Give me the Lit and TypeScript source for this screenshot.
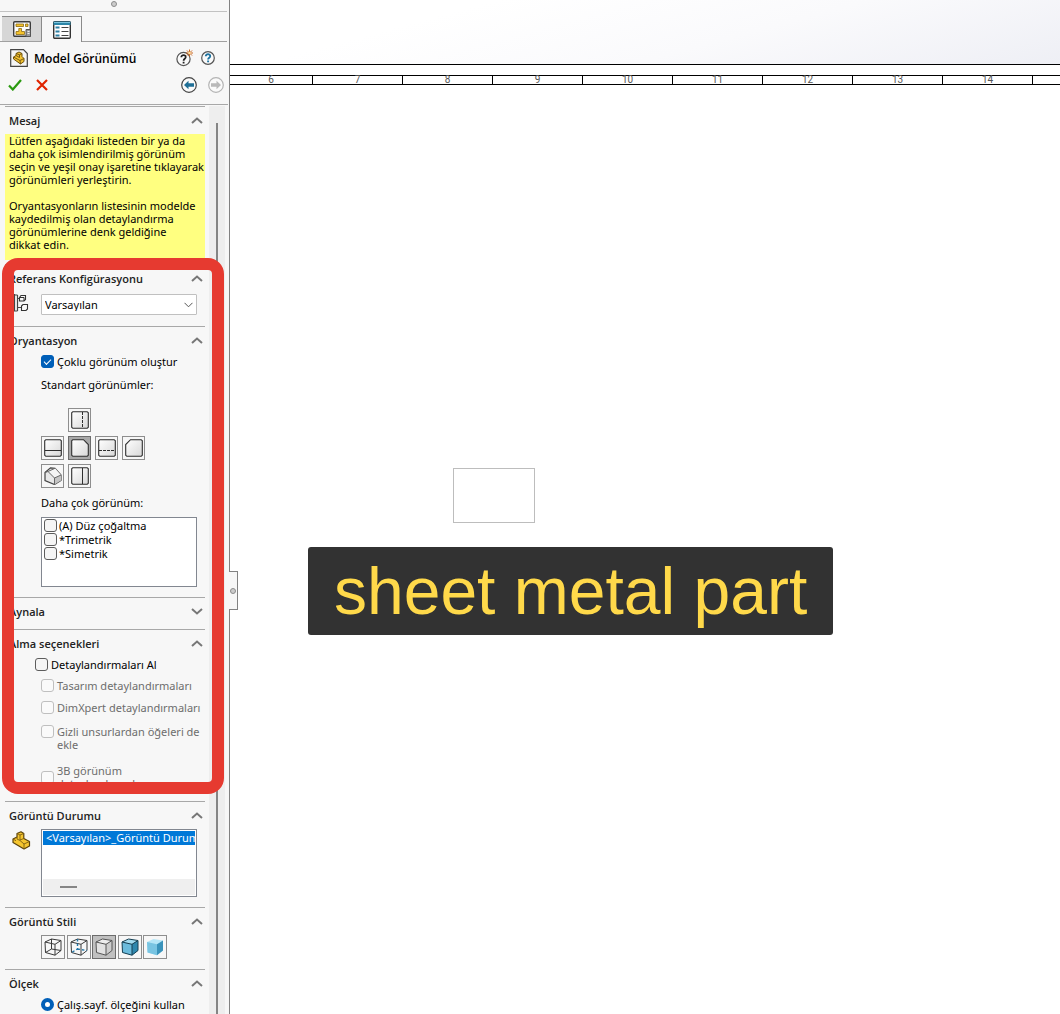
import { LitElement, html, svg, css, nothing } from "lit";
import { customElement, property, state } from "lit/decorators.js";

const icons: Record<string, unknown> = {
  sheetTab: svg`<svg width="18" height="16" viewBox="0 0 18 16">
    <rect x=".7" y=".7" width="16.600" height="14.600" rx="1" fill="#fdfdfd" stroke="#3c3c3c" stroke-width="1.400"/>
    <path d="M3 3h7.500v2.500H3zM12.500 3H15v2.500h-2.500zM5.800 7.500h2.700v3h3v3H3v-3h2.800z" fill="#f5c32c" stroke="#8a6a14" stroke-width=".8"/>
    <path d="M13 15.500V8.500h4.500v7z" fill="#999" stroke="#555" stroke-width="1"/><path d="M14.500 10.500h2M14.500 12.500h2" stroke="#eee"/></svg>`,
  listTab: svg`<svg width="18" height="18" viewBox="0 0 18 18">
    <rect x=".7" y=".7" width="16.600" height="16.600" rx="1" fill="#fff" stroke="#333" stroke-width="1.400"/>
    <path d="M.5.500h17v3.500H.5z" fill="#2c86a8"/><path d="M1 1.500h16" stroke="#7cc3dc"/>
    <path d="M2.500 6.500h4M2.500 10.500h4M2.500 14.500h4" stroke="#2c7fa3" stroke-width="2.200"/>
    <path d="M8.500 6.500h7M8.500 10.500h7M8.500 14.500h7" stroke="#444" stroke-width="1.200"/></svg>`,
  modelView: svg`<svg width="18" height="18" viewBox="0 0 18 18">
    <path d="M.7.7H13.500L17.300 4.500V17.300H.7z" fill="#f5f5f5" stroke="#444" stroke-width="1.200"/>
    <path d="M3.500 8 6 6.500V4.500L9 3l3 1.500V7.500l2 2v3L10.500 15 3.500 10z" fill="#f2c230" stroke="#6d500c" stroke-width="1"/>
    <path d="M3.500 8l6.500 3.500 4-2M10 11.500 10.500 15M6 6.500l3.500 2V5.800L12 4.500M6 4.500l3.500 1.300" fill="none" stroke="#6d500c" stroke-width=".9"/></svg>`,
  whatsNew: svg`<svg width="18" height="18" viewBox="0 0 18 18">
    <circle cx="7.500" cy="10" r="6.600" fill="#fafafa" stroke="#555" stroke-width="1.200"/>
    <path d="M5.300 8.200C5.300 5.300 9.900 5.400 9.700 8.200 9.600 9.800 7.600 9.700 7.600 11.700M7.600 12.700v1.800" fill="none" stroke="#222" stroke-width="1.800"/>
    <path d="M13.500.500v7M10 4h7M11 1.500l5 5M16 1.500l-5 5" stroke="#c8641e" stroke-width="1"/><circle cx="13.500" cy="4" r="1.300" fill="#ffe2a0"/></svg>`,
  help: svg`<svg width="14" height="14" viewBox="0 0 14 14">
    <circle cx="7" cy="7" r="6.300" fill="#fafafa" stroke="#555" stroke-width="1.200"/>
    <path d="M4.800 5.200C4.800 2.400 9.300 2.500 9.200 5.200 9.100 6.800 7.100 6.800 7.100 8.600M7.100 9.600v1.700" fill="none" stroke="#1f73a0" stroke-width="1.900"/></svg>`,
  ok: svg`<svg width="14" height="12" viewBox="0 0 14 12"><path d="M1 6.500 4.800 10.500 13 1" fill="none" stroke="#2b9a10" stroke-width="2.200"/></svg>`,
  cancel: svg`<svg width="12" height="12" viewBox="0 0 12 12"><path d="M1 1 11 11M11 1 1 11" stroke="#e02400" stroke-width="2.200"/></svg>`,
  back: svg`<svg width="16" height="16" viewBox="0 0 16 16"><circle cx="8" cy="8" r="7.300" fill="#fafafa" stroke="#444" stroke-width="1.200"/>
    <path d="M3 8 7.500 3.800V6.200H13v3.600H7.500v2.400z" fill="#1f6f96"/></svg>`,
  forward: svg`<svg width="16" height="16" viewBox="0 0 16 16"><circle cx="8" cy="8" r="7.300" fill="#fafafa" stroke="#b4b4b4" stroke-width="1.200"/>
    <path d="M13 8 8.500 3.800V6.200H3v3.600h5.500v2.400z" fill="#b9b9b9"/></svg>`,
  up: svg`<svg width="12" height="7" viewBox="0 0 12 7"><path d="M1 6 6 1.500 11 6" fill="none" stroke="#777" stroke-width="2"/></svg>`,
  down: svg`<svg width="12" height="7" viewBox="0 0 12 7"><path d="M1 1 6 5.500 11 1" fill="none" stroke="#777" stroke-width="2"/></svg>`,
  config: svg`<svg width="20" height="18" viewBox="0 0 20 18"><path d="M5.500 0v17.500M8.500 1v16M5.500 1h3M5.500 17h3M8.500 4.500h3M8.500 13.500h5M1 2h4M1 8.500h4M1 15h4" fill="none" stroke="#444" stroke-width="1.200"/>
    <path d="M10.500 3.500 12 1.500h4.500v4L15 7h-4.500zM12.500 12 14 10.500H18.500v4.500L17 16.500h-4.500z" fill="#fafafa" stroke="#333" stroke-width="1.100"/><path d="M10.500 3.500H15V7" fill="none" stroke="#333"/></svg>`,
  part: svg`<svg width="19" height="19" viewBox="0 0 19 19"><path d="M1 8 5 6V2.500L9 .8 11.800 2.500V7.500L17.500 10.500V15L12 18 1 11.500z" fill="#f6c62f" stroke="#5b430b" stroke-width="1.200" stroke-linejoin="round"/>
    <path d="M5 2.500 8 4 11.800 2.500M8 4v5L11.800 7.500M5 6v2L8 9.500 12 13V18M1 8 4 9.700M12 13l5.500-2.500" fill="none" stroke="#7c5d12" stroke-width=".9"/></svg>`,
};

const viewBase = (extra: unknown, outline = "M1.800.7H16.200L17.300 1.800V16.200L16.200 17.300H1.800L.7 16.200V1.800z") => svg`
  <svg width="18" height="18" viewBox="0 0 18 18"><defs><linearGradient id="g" x1="0" y1="0" x2="1" y2="1"><stop offset="0" stop-color="#fff"/><stop offset="1" stop-color="#d8d8d8"/></linearGradient></defs>
  <path d=${outline} fill="url(#g)" stroke="#2e2e2e" stroke-width="1.100"/>${extra}</svg>`;

const line = (d: string, dash = "") => svg`<path d=${d} fill="none" stroke="#2e2e2e" stroke-width="1" stroke-dasharray=${dash || "none"}/>`;

const views = [
  { id: "top", label: "Üst", area: "top", icon: viewBase(line("M11.500 1v16", "3 1")) },
  { id: "left", label: "Sol", area: "left", icon: viewBase(line("M1 11.500h16")) },
  { id: "front", label: "Ön", area: "front", icon: viewBase(nothing, "M1.800.7H12.500L17.300 5.500V16.200L16.200 17.300H1.800L.7 16.200V1.800z") },
  { id: "right", label: "Sağ", area: "right", icon: viewBase(line("M1 11.500h16", "3 1")) },
  { id: "rear", label: "Arka", area: "rear", icon: viewBase(nothing, "M5.500.7H16.200L17.300 1.800V16.200L16.200 17.300H1.800L.7 16.200V5.500z") },
  {
    id: "iso", label: "İzometrik", area: "iso",
    icon: svg`<svg width="18" height="18" viewBox="0 0 18 18"><path d="M1 5.500 6.500.8 11 1.300 17 8v5.500L10.500 17.500 1 13.500z" fill="#e8e8e8" stroke="#444" stroke-width="1.200"/>
      <path d="M4 4.500 11 1.300 17 8 10.500 11z" fill="#f4f4f4"/><path d="M10.500 11 17 8v5.500l-6.500 4z" fill="#c4c4c4"/>
      <path d="M1 5.500 4 4.500 10.500 11V17.500M4 4.500 11 1.300M10.500 11 17 8" fill="none" stroke="#666" stroke-width="1"/></svg>`,
  },
  { id: "bottom", label: "Alt", area: "bottom", icon: viewBase(line("M11.500 1v16")) },
];

const cube = (face: string, side: string, top: string, stroke: string, extra: unknown = nothing) => svg`
  <svg width="18" height="18" viewBox="0 0 18 18"><path d="M1 4 7.500 1 17 2.500V12.500L11 17.200 1.500 14.500z" fill=${top}/>
  <path d="M1 4 11 6.300V17.200L1.500 14.500z" fill=${face}/><path d="M11 6.300 17 2.500V12.500L11 17.200z" fill=${side}/>
  <path d="M1 4 7.500 1 17 2.500V12.500L11 17.200 1.500 14.500zM1 4 11 6.300 17 2.500M11 6.300V17.200" fill="none" stroke=${stroke} stroke-width="1" stroke-linejoin="round"/>${extra}</svg>`;

const displayStyles = [
  { id: "wire", label: "Tel kafes", icon: cube("none", "none", "none", "#3a3a3a", svg`<path d="M7.500 1V11L1.500 14.500M7.500 11 17 12.500" fill="none" stroke="#3a3a3a"/>`) },
  { id: "hidden", label: "Gizli çizgiler görünür", icon: cube("none", "none", "none", "#3a3a3a", svg`<path d="M7.500 1V11L1.500 14.500M7.500 11 17 12.500" fill="none" stroke="#2277a8" stroke-width="1.400" stroke-dasharray="2.500 2"/>`) },
  { id: "removed", label: "Gizli çizgiler kaldırılmış", icon: cube("#e2e2e2", "#cecece", "#ededed", "#555") },
  { id: "edges", label: "Kenarları ile gölgeli", icon: cube("#6bbbdc", "#2f87ad", "#a4dcf0", "#163f52") },
  { id: "shaded", label: "Gölgeli", icon: cube("#78c4e2", "#3a93bb", "#b5e6f7", "none") },
];

@customElement("pm-section")
class PmSection extends LitElement {
  @property() heading = "";
  @property({ type: Boolean, reflect: true }) collapsed = false;

  static styles = css`
    :host { display: block; border-top: 1px solid #a8a8a8; }
    :host([collapsed]) { padding-bottom: 4px; }
    .head {
      display: flex; align-items: center; justify-content: space-between;
      width: 100%; height: 27px; padding: 0 2px 0 4px; border: 0; background: none;
      font: 600 11px/13px "Open Sans", "Noto Sans", sans-serif; color: #222;
    }
    .chevron { display: flex; }
  `;

  render() {
    return html`<button class="head" aria-expanded=${this.collapsed ? "false" : "true"} @click=${() => (this.collapsed = !this.collapsed)}>
        <span>${this.heading}</span><span class="chevron">${this.collapsed ? icons.down : icons.up}</span>
      </button>
      ${this.collapsed ? nothing : html`<slot></slot>`}`;
  }
}

@customElement("app-root")
class AppRoot extends LitElement {
  @state() view = "front";
  @state() displayStyle = "removed";

  static styles = css`
    :host { display: block; font: 11px/13px "Noto Sans", "Open Sans", sans-serif; color: #000; }
    * { box-sizing: border-box; }
    button { font: inherit; padding: 0; }
    svg { display: block; }
    .shell { display: flex; height: 100vh; overflow: hidden; background: #fff; }

    .panel { flex: 0 0 230px; min-width: 0; display: flex; flex-direction: column; background: #f7f7f7; border-right: 1px solid #828282; }
    .grip { display: flex; justify-content: center; height: 12px; padding-top: 1px; margin-right: 2px; border-bottom: 1px solid #c2c2c2; }
    .dot { width: 6px; height: 6px; border: 1px solid #8c8c8c; border-radius: 50%; background: #ccc; }
    .tabs { display: flex; height: 30px; padding: 4px 0 0 2px; margin-right: 2px; border-bottom: 1px solid #a0a0a0; }
    .tab { display: flex; align-items: center; justify-content: center; width: 40px; height: 25px; border: 1px solid #8a8a8a; border-width: 1px 1px 0 0; background: #d6d6d6; }
    .tab.active { height: 26px; background: #f7f7f7; }
    .title { display: flex; align-items: center; height: 32px; padding: 0 14px 0 10px; gap: 6px; }
    .title h1 { flex: 1; margin: 0; padding-top: 1px; font: 600 12px/16px "Open Sans", "Noto Sans", sans-serif; color: #000; white-space: nowrap; }
    .icon { display: flex; border: 0; background: none; }
    .help { display: flex; align-items: center; gap: 7px; }
    .actions { display: flex; align-items: center; height: 31px; padding: 0 4px 8px 8px; margin-right: 1px; border-bottom: 1px solid #a8a8a8; gap: 14px; }
    .actions .spacer { flex: 1; }
    .actions .nav { display: flex; gap: 11px; }

    .body { flex: 1; display: flex; min-height: 0; padding: 1px 4px 0 5px; }
    .column { flex: 1; min-width: 0; }
    .track { width: 16px; margin-left: 4px; padding: 17px 0 0 7px; background: #eeeeee; }
    .thumb { width: 2px; height: 100%; background: #858585; }

    .message { margin-bottom: 4px; padding: 0 0 9px 4px; background: #ffff80; }
    .message p { margin: 0 0 13px; }
    .message p:last-child { margin: 0; }

    .marked { position: relative; }
    .marker { position: absolute; inset: -6px -19px 7px -3px; border: 12px solid #e63a30; border-radius: 16px; pointer-events: none; }

    .with-icon { display: flex; }
    .lead { flex: none; width: 36px; padding: 2px 0 0 7px; }
    .lead.wide { padding: 0 0 0 4px; }
    .config { padding: 2px 8px 11px 0; }
    .select { position: relative; flex: 1; }
    select { display: block; width: 100%; height: 21px; padding: 0 3px; appearance: none; border: 1px solid #c0c0c0; border-radius: 1px; background: #fff; font: inherit; color: #000; }
    .select svg { position: absolute; right: 4px; top: 8px; pointer-events: none; }

    .inset { padding: 1px 8px 10px 36px; }
    .check { display: flex; gap: 3px; }
    .check.center { align-items: center; }
    .check.off { color: #6d6d6d; }
    input { flex: none; width: 13px; height: 13px; margin: 0; appearance: none; border: 1px solid #5c5c5c; border-radius: 3px; background: #f5f5f5; }
    input:disabled { border-color: #bfbfbf; background: #fafafa; }
    input[type="checkbox"]:checked { border-color: #005fb8; background: #005fb8; }
    input[type="checkbox"]:checked::after { content: ""; display: block; width: 6px; height: 3px; margin: 3px 0 0 2px; border: solid #fff; border-width: 0 0 1px 1px; transform: rotate(-45deg); }
    input[type="radio"] { border-radius: 50%; }
    input[type="radio"]:checked { border: 4px solid #005fb8; background: #fff; }
    .caption { margin: 0; padding: 10px 0; }
    .caption.tight { padding: 8px 0; }

    .views { display: grid; grid-template: "x top y z" 24px "left front right rear" 24px "iso bottom v w" 24px / 23px 23px 23px 23px; gap: 4px; padding-top: 7px; }
    .tool { display: flex; align-items: center; justify-content: center; border: 1px solid #8e8e8e; background: #f7f7f7; }
    .tool[aria-pressed="true"] { border-color: #6c6c6c; background: #a9a9a9; }
    .styles { display: flex; justify-content: space-between; width: 126px; }
    .styles .tool { width: 24px; height: 24px; }
    .styles .tool[aria-pressed="true"] { background: #c0c0c0; }

    .list { height: 70px; margin: 0; padding: 0 2px; border: 1px solid #828790; background: #fff; list-style: none; }
    .list .check { height: 14px; gap: 2px; align-items: center; }

    .imports { display: flex; flex-direction: column; padding: 1px 0 11px 36px; }
    .imports .first { margin: 0 0 8px -6px; }
    .imports .item { margin-bottom: 9px; }
    .imports .item.tall { margin: 2px 0 13px; }
    .state { padding: 0 8px 10px 0; }
    .statelist { flex: 1; min-width: 0; display: flex; flex-direction: column; height: 68px; padding: 1px; border: 1px solid #828790; background: #fff; }
    .statelist ul { flex: 1; margin: 0; padding: 0; list-style: none; }
    .statelist li { height: 14px; padding-left: 3px; overflow: hidden; white-space: nowrap; background: #0078d7; color: #fff; }
    .hscroll { height: 16px; padding: 7px 0 0 17px; background: #efefef; }
    .hthumb { width: 17px; height: 2px; background: #858585; }
    .stylebox { padding: 0 8px 10px 36px; }

    .canvas { flex: 1; min-width: 0; position: relative; display: flex; flex-direction: column; }
    .backdrop { height: 65px; border-bottom: 1px solid #000; background: linear-gradient(165deg, #fff 25%, #fafafc 60%, #eeeff5); }
    .ruler { display: flex; height: 10px; margin-top: 10px; border: solid #000; border-width: 1px 0; }
    .cell { flex: 0 0 90px; display: flex; align-items: center; justify-content: center; border-right: 1px solid #000; font: 10px/8px "Roboto", sans-serif; color: #555; }
    .cell:first-child { flex-basis: 83px; }
    .cell:last-child { flex: 1; border-right: 0; }
    .splitter { position: absolute; left: -1px; top: 571px; width: 9px; height: 39px; display: flex; align-items: center; justify-content: center; border: 1px solid #828282; border-left: 0; background: #f7f7f7; }
    .splitter .dot { flex: none; }
    .drawing { position: absolute; left: 223px; top: 468px; width: 82px; height: 55px; border: 1px solid #bdbdbd; }
    .banner { position: absolute; left: 78px; top: 547px; margin: 0; padding: 6px 26px; border-radius: 3px; background: #323232; color: #ffd94a; font: 66px/76px "Liberation Sans", Arial, sans-serif; white-space: nowrap; }
  `;

  private check(label: string, cls = "", checked = false, disabled = false) {
    return html`<label class="check ${cls} ${disabled ? "off" : ""}"><input type="checkbox" ?checked=${checked} ?disabled=${disabled} /><span>${label}</span></label>`;
  }

  render() {
    return html`<main class="shell">
      <aside class="panel">
        <div class="grip"><span class="dot"></span></div>
        <nav class="tabs">
          <button class="tab" aria-label="Tasarım ağacı">${icons.sheetTab}</button>
          <button class="tab active" aria-label="Özellikler">${icons.listTab}</button>
        </nav>
        <header class="title">
          ${icons.modelView}
          <h1>Model Görünümü</h1>
          <div class="help">
            <button class="icon" aria-label="Yenilikler">${icons.whatsNew}</button>
            <button class="icon" aria-label="Yardım">${icons.help}</button>
          </div>
        </header>
        <div class="actions">
          <button class="icon" aria-label="Tamam">${icons.ok}</button>
          <button class="icon" aria-label="İptal">${icons.cancel}</button>
          <span class="spacer"></span>
          <div class="nav">
            <button class="icon" aria-label="Geri">${icons.back}</button>
            <button class="icon" aria-label="İleri" disabled>${icons.forward}</button>
          </div>
        </div>
        <div class="body">
          <div class="column">
            <pm-section heading="Mesaj">
              <div class="message">
                <p>Lütfen aşağıdaki listeden bir ya da daha çok isimlendirilmiş görünüm seçin ve yeşil onay işaretine tıklayarak görünümleri yerleştirin.</p>
                <p>Oryantasyonların listesinin modelde kaydedilmiş olan detaylandırma görünümlerine denk geldiğine<br />dikkat edin.</p>
              </div>
            </pm-section>
            <div class="marked">
              <pm-section heading="Referans Konfigürasyonu">
                <div class="with-icon config">
                  <span class="lead wide">${icons.config}</span>
                  <div class="select">
                    <select aria-label="Referans Konfigürasyonu"><option>Varsayılan</option></select>
                    <svg width="9" height="6" viewBox="0 0 9 6"><path d="M.5.800 4.500 4.800 8.500.800" fill="none" stroke="#555"/></svg>
                  </div>
                </div>
              </pm-section>
              <pm-section heading="Oryantasyon">
                <div class="inset">
                  ${this.check("Çoklu görünüm oluştur", "", true)}
                  <p class="caption">Standart görünümler:</p>
                  <div class="views">
                    ${views.map((v) => html`<button class="tool" style="grid-area:${v.area}" aria-label=${v.label} aria-pressed=${this.view === v.id} @click=${() => (this.view = v.id)}>${v.icon}</button>`)}
                  </div>
                  <p class="caption tight">Daha çok görünüm:</p>
                  <ul class="list">
                    ${["(A) Düz çoğaltma", "*Trimetrik", "*Simetrik"].map((n) => html`<li>${this.check(n)}</li>`)}
                  </ul>
                </div>
              </pm-section>
              <pm-section heading="Aynala" collapsed></pm-section>
              <pm-section heading="Alma seçenekleri">
                <div class="imports">
                  ${this.check("Detaylandırmaları Al", "first")}
                  ${this.check("Tasarım detaylandırmaları", "item", false, true)}
                  ${this.check("DimXpert detaylandırmaları", "item", false, true)}
                  ${this.check("Gizli unsurlardan öğeleri de ekle", "item tall", false, true)}
                  ${this.check("3B görünüm detaylandırmaları", "center", false, true)}
                </div>
              </pm-section>
              <div class="marker"></div>
            </div>
            <pm-section heading="Görüntü Durumu">
              <div class="with-icon state">
                <span class="lead">${icons.part}</span>
                <div class="statelist">
                  <ul role="listbox" aria-label="Görüntü Durumu"><li role="option" aria-selected="true">&lt;Varsayılan&gt;_Görüntü Durumu</li></ul>
                  <div class="hscroll"><div class="hthumb"></div></div>
                </div>
              </div>
            </pm-section>
            <pm-section heading="Görüntü Stili">
              <div class="stylebox"><div class="styles">
                ${displayStyles.map((s) => html`<button class="tool" aria-label=${s.label} aria-pressed=${this.displayStyle === s.id} @click=${() => (this.displayStyle = s.id)}>${s.icon}</button>`)}
              </div></div>
            </pm-section>
            <pm-section heading="Ölçek">
              <div class="inset">
                <label class="check"><input type="radio" name="scale" checked /><span>Çalış.sayf. ölçeğini kullan</span></label>
              </div>
            </pm-section>
          </div>
          <div class="track"><div class="thumb"></div></div>
        </div>
      </aside>
      <section class="canvas">
        <div class="backdrop"></div>
        <div class="ruler">${[6, 7, 8, 9, 10, 11, 12, 13, 14, ""].map((n) => html`<span class="cell">${n}</span>`)}</div>
        <div class="splitter"><span class="dot"></span></div>
        <div class="drawing"></div>
        <p class="banner">sheet metal part</p>
      </section>
    </main>`;
  }
}
